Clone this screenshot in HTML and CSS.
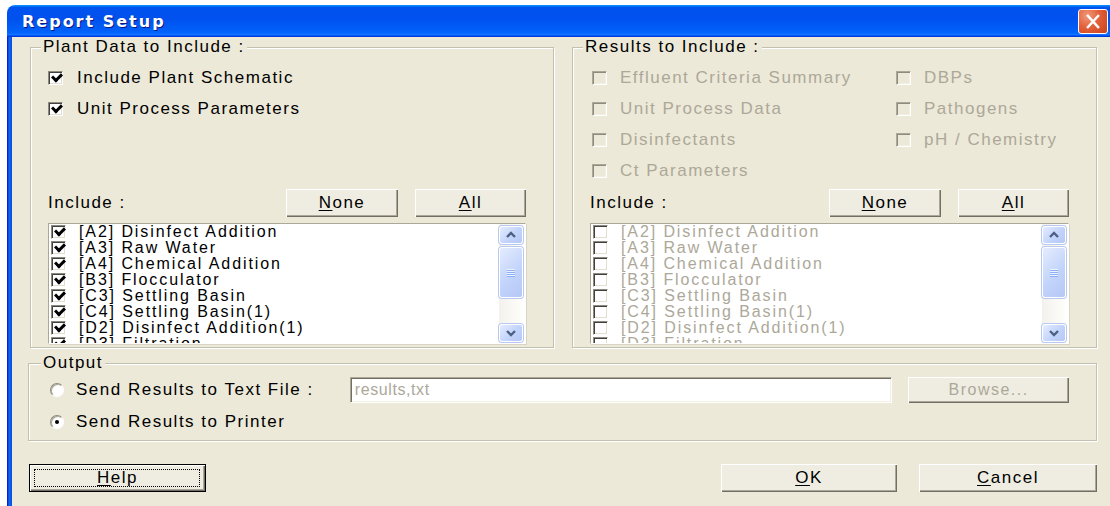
FILE: index.html
```html
<!DOCTYPE html>
<html lang="en">
<head>
<meta charset="utf-8">
<title>Report Setup</title>
<link rel="stylesheet" href="styles.css">
</head>
<body>
<div class="window">
  <div class="titlebar">
    <span class="title">Report Setup</span>
    <span class="close" aria-label="Close">
      <svg width="30" height="25" viewBox="0 0 30 25"><path d="M9.5 6.5 L20.5 18.5 M20.5 6.5 L9.5 18.5" stroke="#fff" stroke-width="2.6" stroke-linecap="square" fill="none"/></svg>
    </span>
  </div>
  <div class="frame">
    <div class="client">
      <div class="groups">
        <fieldset class="group">
          <legend>Plant Data to Include :</legend>
          <div class="group-body">
            <div class="options">
              <div class="opt"><span class="chk checked"></span>Include Plant Schematic</div>
              <div class="opt"><span class="chk checked"></span>Unit Process Parameters</div>
            </div>
            <div class="include-row">
              <span class="include-label">Include :</span>
              <span class="btn btn-none"><u>N</u>one</span>
              <span class="btn btn-all"><u>A</u>ll</span>
            </div>
            <div class="list">
              <ul class="list-items">
                <li><span class="chk checked"></span>[A2] Disinfect Addition</li>
                <li><span class="chk checked"></span>[A3] Raw Water</li>
                <li><span class="chk checked"></span>[A4] Chemical Addition</li>
                <li><span class="chk checked"></span>[B3] Flocculator</li>
                <li><span class="chk checked"></span>[C3] Settling Basin</li>
                <li><span class="chk checked"></span>[C4] Settling Basin(1)</li>
                <li><span class="chk checked"></span>[D2] Disinfect Addition(1)</li>
                <li><span class="chk checked"></span>[D3] Filtration</li>
              </ul>
              <div class="scrollbar">
                <span class="sb-btn"><svg width="22" height="16" viewBox="0 0 22 16"><path d="M7 10 L11 6 L15 10" stroke="#4D6185" stroke-width="2.4" fill="none"/></svg></span>
                <span class="sb-thumb"><span class="grip"></span></span>
                <span class="sb-track"></span>
                <span class="sb-btn"><svg width="22" height="16" viewBox="0 0 22 16"><path d="M7 6 L11 10 L15 6" stroke="#4D6185" stroke-width="2.4" fill="none"/></svg></span>
              </div>
            </div>
          </div>
        </fieldset>

        <fieldset class="group">
          <legend>Results to Include :</legend>
          <div class="group-body">
            <div class="options results">
              <div class="opt disabled"><span class="chk off"></span>Effluent Criteria Summary</div>
              <div class="opt disabled"><span class="chk off"></span>Unit Process Data</div>
              <div class="opt disabled"><span class="chk off"></span>Disinfectants</div>
              <div class="opt disabled"><span class="chk off"></span>Ct Parameters</div>
              <div class="opt disabled"><span class="chk off"></span>DBPs</div>
              <div class="opt disabled"><span class="chk off"></span>Pathogens</div>
              <div class="opt disabled"><span class="chk off"></span>pH / Chemistry</div>
            </div>
            <div class="include-row">
              <span class="include-label">Include :</span>
              <span class="btn btn-none"><u>N</u>one</span>
              <span class="btn btn-all"><u>A</u>ll</span>
            </div>
            <div class="list list-disabled">
              <ul class="list-items">
                <li><span class="chk"></span>[A2] Disinfect Addition</li>
                <li><span class="chk"></span>[A3] Raw Water</li>
                <li><span class="chk"></span>[A4] Chemical Addition</li>
                <li><span class="chk"></span>[B3] Flocculator</li>
                <li><span class="chk"></span>[C3] Settling Basin</li>
                <li><span class="chk"></span>[C4] Settling Basin(1)</li>
                <li><span class="chk"></span>[D2] Disinfect Addition(1)</li>
                <li><span class="chk"></span>[D3] Filtration</li>
              </ul>
              <div class="scrollbar">
                <span class="sb-btn"><svg width="22" height="16" viewBox="0 0 22 16"><path d="M7 10 L11 6 L15 10" stroke="#4D6185" stroke-width="2.4" fill="none"/></svg></span>
                <span class="sb-thumb"><span class="grip"></span></span>
                <span class="sb-track"></span>
                <span class="sb-btn"><svg width="22" height="16" viewBox="0 0 22 16"><path d="M7 6 L11 10 L15 6" stroke="#4D6185" stroke-width="2.4" fill="none"/></svg></span>
              </div>
            </div>
          </div>
        </fieldset>
      </div>

      <fieldset class="group output">
        <legend>Output</legend>
        <div class="output-body">
          <div class="out-row">
            <div class="opt radio-opt"><span class="radio"></span>Send Results to Text File :</div>
            <span class="field">results,txt</span>
            <span class="btn btn-browse">Browse...</span>
          </div>
          <div class="out-row">
            <div class="opt radio-opt"><span class="radio selected"></span>Send Results to Printer</div>
          </div>
        </div>
      </fieldset>

      <div class="actions">
        <span class="btn btn-help"><u>H</u>elp</span>
        <span class="btn btn-ok"><u>O</u>K</span>
        <span class="btn btn-cancel"><u>C</u>ancel</span>
      </div>
    </div>
  </div>
</div>
</body>
</html>
```

FILE: styles.css
```css
* {
  box-sizing: border-box;
}

html,
body {
  margin: 0;
  padding: 0;
  background: #fff;
  overflow: hidden;
}

body {
  width: 1110px;
  height: 506px;
  font-family: "Liberation Sans", Arial, sans-serif;
  font-size: 17px;
  letter-spacing: 1.5px;
  color: #000;
}

/* ---------- window chrome ---------- */
.window {
  width: 1110px;
  margin: 5px 0 0 7px;
}

.titlebar {
  display: flex;
  align-items: center;
  height: 32px;
  padding: 0 9px 0 15px;
  border-radius: 8px 8px 0 0;
  background: linear-gradient(180deg, #0997ff, #0053ee 8%, #0050ee 40%, #0060f8 80%, #0066ff 88%, #1a74ff 93%, #005bff 95%, #003dd7 97%, #003dd7);
}

.title {
  flex: 1;
  color: #fff;
  font-family: "DejaVu Sans", "Liberation Sans", sans-serif;
  font-weight: bold;
  font-size: 16px;
  letter-spacing: 2px;
  text-shadow: 1px 1px #0a1883;
}

.close {
  display: flex;
  width: 30px;
  height: 25px;
  border: 1px solid #fff;
  border-radius: 3px;
  background: radial-gradient(circle at 30% 25%, #f19a7c 0, #e2603a 45%, #c8401c 100%);
  align-items: center;
  justify-content: center;
}

.close svg {
  display: block;
}

.frame {
  padding-left: 5px;
  background: linear-gradient(90deg, #0019cf 0, #0831d9 1px, #166aee 2px, #0b52e4 4px, #0855dd 5px);
}

.client {
  height: 469px;
  padding: 2px 0 0 16px;
  background: #ece9d8;
}

/* ---------- group boxes ---------- */
.group {
  margin: 0;
  padding: 0 27px 0 10px;
  min-inline-size: 0;
  border: 1px solid #c3c0b0;
  box-shadow: inset 1px 1px #fff, 1px 1px #fff;
}

.group legend {
  padding: 0 2px;
  line-height: 16px;
  background: #ece9d8;
}

.groups {
  display: grid;
  grid-template-columns: 524px 525px;
  column-gap: 18px;
  margin-left: 2px;
}

.group-body {
  display: flex;
  flex-direction: column;
  padding: 7px 0 3px 7px;
}

.options {
  height: 127px;
}

.options.results {
  display: grid;
  grid-template-rows: repeat(4, 31px);
  grid-auto-flow: column;
  grid-template-columns: 304px 1fr;
}

.opt {
  display: flex;
  align-items: center;
  height: 31px;
  gap: 14px;
  white-space: nowrap;
}

.opt.disabled {
  color: #aca899;
}

.results .opt {
  padding-left: 2px;
  gap: 13px;
}

/* ---------- checkboxes and radios ---------- */
.chk {
  position: relative;
  flex: none;
  width: 15px;
  height: 14px;
  background: #fff;
  border: 1px solid;
  border-color: #8e8b7c #fff #fff #8e8b7c;
  box-shadow: inset 1px 1px #404040, inset -1px -1px #e2dfd2;
}

.chk.off {
  background: #ece9d8;
  border-color: #aca899 #fff #fff #aca899;
  box-shadow: inset 1px 1px #8e8b7c, inset -1px -1px #f1efe2;
}

.chk.checked::after {
  content: "";
  position: absolute;
  left: 3px;
  top: 1px;
  width: 7px;
  height: 4px;
  border-left: 3px solid #000;
  border-bottom: 3px solid #000;
  transform: rotate(-45deg);
}

.radio {
  position: relative;
  flex: none;
  width: 14px;
  height: 14px;
  border-radius: 50%;
  background: #fff;
  border: 1px solid;
  border-color: #8e8b7c #fff #fff #8e8b7c;
  box-shadow: inset 1px 1px #aca899;
}

.radio.selected::after {
  content: "";
  position: absolute;
  left: 4px;
  top: 4px;
  width: 4px;
  height: 4px;
  border-radius: 50%;
  background: #000;
}

/* ---------- buttons ---------- */
.btn {
  display: flex;
  align-items: center;
  justify-content: center;
  height: 28px;
  background: #efede2;
  box-shadow: inset 1px 1px #fff, inset -1px -1px #716f64, inset -2px -2px #aca899;
  white-space: nowrap;
}

.btn u {
  text-decoration-thickness: 1px;
  text-underline-offset: 2px;
}

/* ---------- include row + list ---------- */
.include-row {
  display: flex;
  align-items: center;
  height: 28px;
}

.include-label {
  flex: 1;
}

.btn-none {
  width: 112px;
  margin-right: 17px;
}

.btn-all {
  width: 111px;
}

.list {
  display: flex;
  height: 121px;
  margin-top: 6px;
  background: #fff;
  border: 1px solid;
  border-color: #aca899 #fff #fff #aca899;
  box-shadow: 1px 1px #d8d5c6;
  overflow: hidden;
}

.list-items {
  flex: 1;
  margin: 0;
  padding: 0 0 0 2px;
  list-style: none;
  font-size: 16px;
  letter-spacing: 1.9px;
  line-height: 16px;
  overflow: hidden;
}

.list-items li {
  display: flex;
  align-items: center;
  height: 16px;
  gap: 13px;
  white-space: nowrap;
}

.list-items .chk {
  width: 15px;
  height: 14px;
}

.list-disabled .list-items {
  color: #aca899;
}

.scrollbar {
  display: flex;
  flex-direction: column;
  width: 24px;
  margin-right: 2px;
  padding: 2px 0 1px;
  background: linear-gradient(90deg, #f3f1ec, #fefefb);
}

.sb-btn,
.sb-thumb {
  display: flex;
  align-items: center;
  justify-content: center;
  border: 1px solid #fff;
  border-radius: 3px;
  background: linear-gradient(135deg, #e4ecfe, #c3d4fb 55%, #b5c8f5);
  box-shadow: 0 0 0 1px #b7c9f2;
}

.sb-btn {
  height: 18px;
}

.sb-thumb {
  height: 51px;
  margin-top: 3px;
}

.grip {
  width: 8px;
  height: 8px;
  background: repeating-linear-gradient(180deg, #eef4fe 0 1px, #8cb0f8 1px 2px);
}

.sb-track {
  flex: 1;
}

/* ---------- output ---------- */
.output {
  width: 1069px;
  margin-top: 7px;
  padding-left: 12px;
}

.output-body {
  display: flex;
  flex-direction: column;
  gap: 6px;
  padding: 6px 0 5px 9px;
}

.out-row {
  display: flex;
  align-items: center;
  height: 26px;
}

.radio-opt {
  width: 300px;
  height: 26px;
  gap: 12px;
}

.field {
  display: flex;
  align-items: center;
  width: 543px;
  height: 26px;
  padding-left: 4px;
  background: #fff;
  color: #aca899;
  font-size: 16px;
  letter-spacing: 0.6px;
  border: 1px solid;
  border-color: #aca899 #fff #fff #aca899;
  box-shadow: inset 1px 1px #716f64, inset -1px -1px #f1efe2;
}

.btn-browse {
  width: 161px;
  height: 26px;
  margin-left: 16px;
  color: #aca899;
  font-size: 16px;
}

/* ---------- dialog buttons ---------- */
.actions {
  display: flex;
  align-items: center;
  gap: 22px;
  width: 1069px;
  margin-top: 23px;
  padding-left: 1px;
}

.btn-help {
  position: relative;
  width: 177px;
  margin-right: auto;
  border: 1px solid #000;
}

.btn-help::after {
  content: "";
  position: absolute;
  inset: 4px 5px 4px 4px;
  border: 1px dotted #000;
}

.btn-ok {
  width: 176px;
}

.btn-cancel {
  width: 178px;
}
```
